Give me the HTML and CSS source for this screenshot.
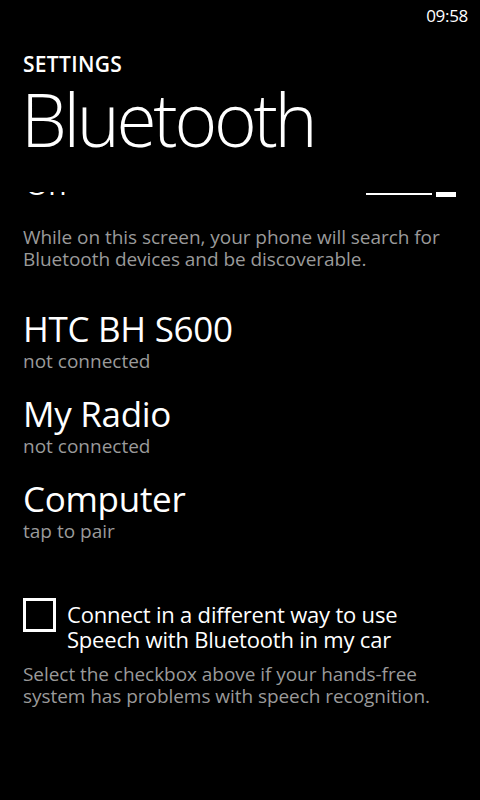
FILE: index.html
```html
<!DOCTYPE html>
<html lang="en">
<head>
<meta charset="utf-8">
<title>Settings - Bluetooth</title>
<link rel="stylesheet" href="styles.css">
</head>
<body>
<div class="phone">
  <div class="status"><span class="time">09:58</span></div>
  <header class="header">
    <div class="app-title">SETTINGS</div>
    <h1 class="page-title">Bluetooth</h1>
  </header>
  <main class="viewport">
    <div class="content">
      <div class="toggle-row">
        <span class="toggle-label">On</span>
        <div class="switch">
          <span class="track"></span>
          <span class="thumb"></span>
        </div>
      </div>
      <p class="note first">While on this screen, your phone will search for Bluetooth devices and be discoverable.</p>
      <ul class="devices">
        <li class="device"><div class="device-name">HTC BH S600</div><div class="device-state">not connected</div></li>
        <li class="device"><div class="device-name">My Radio</div><div class="device-state">not connected</div></li>
        <li class="device"><div class="device-name">Computer</div><div class="device-state">tap to pair</div></li>
      </ul>
      <label class="check-row">
        <span class="checkbox"></span>
        <span class="check-label">Connect in a different way to use Speech with Bluetooth in my car</span>
      </label>
      <p class="note last">Select the checkbox above if your hands-free system has problems with speech recognition.</p>
    </div>
  </main>
</div>
</body>
</html>
```
FILE: styles.css
```css
html, body {
  margin: 0;
  padding: 0;
  background: #000;
}
body {
  font-family: "Open Sans", "Noto Sans", sans-serif;
  color: #fff;
}
.phone {
  width: 480px;
  height: 800px;
  overflow: hidden;
  background: #000;
}
.status {
  height: 32px;
  display: flex;
  justify-content: flex-end;
  padding-right: 12px;
}
.time {
  font-size: 17px;
  line-height: 32px;
  letter-spacing: -0.3px;
}
.header {
  padding: 20px 0 33px 23px;
}
.app-title {
  font-size: 21px;
  font-weight: 600;
  line-height: 24px;
  letter-spacing: 0.3px;
}
.page-title {
  margin: 3px 0 0 -2px;
  font-size: 73px;
  font-weight: 300;
  line-height: 80px;
  letter-spacing: -3.3px;
}
.viewport {
  height: 608px;
  overflow: hidden;
}
.content {
  margin-top: -34px;
  padding: 0 24px 0 23px;
}
.toggle-row {
  height: 40px;
  display: flex;
  justify-content: space-between;
  align-items: flex-start;
}
.toggle-label {
  margin-top: 10px;
  font-size: 30px;
  line-height: 32px;
  padding-left: 2px;
}
.switch {
  display: flex;
  align-items: flex-start;
  gap: 4px;
}
.track {
  display: block;
  width: 66px;
  height: 20px;
  margin-top: 17px;
  border-bottom: 2px solid #fff;
  box-sizing: border-box;
}
.thumb {
  display: block;
  width: 20px;
  height: 24px;
  margin-top: 15px;
  background: #fff;
}
.note {
  margin: 28px 0 0 0;
  font-size: 19px;
  line-height: 22px;
  letter-spacing: -0.05px;
  color: #9a9a9a;
}
.devices {
  list-style: none;
  margin: 39px 0 0 0;
  padding: 0;
}
.device {
  margin-bottom: 21px;
}
.device:last-child {
  margin-bottom: 0;
}
.device-name {
  font-size: 35px;
  line-height: 40px;
  letter-spacing: -0.3px;
}
.device-state {
  font-size: 19px;
  line-height: 24px;
  color: #9a9a9a;
}
.check-row {
  display: flex;
  align-items: flex-start;
  margin-top: 55px;
}
.checkbox {
  flex: none;
  width: 33px;
  height: 34px;
  border: 3px solid #fff;
  box-sizing: border-box;
}
.check-label {
  margin: 4px 0 0 11px;
  font-size: 22px;
  line-height: 25px;
  letter-spacing: -0.2px;
}
.note.last {
  margin-top: 11px;
}
```
